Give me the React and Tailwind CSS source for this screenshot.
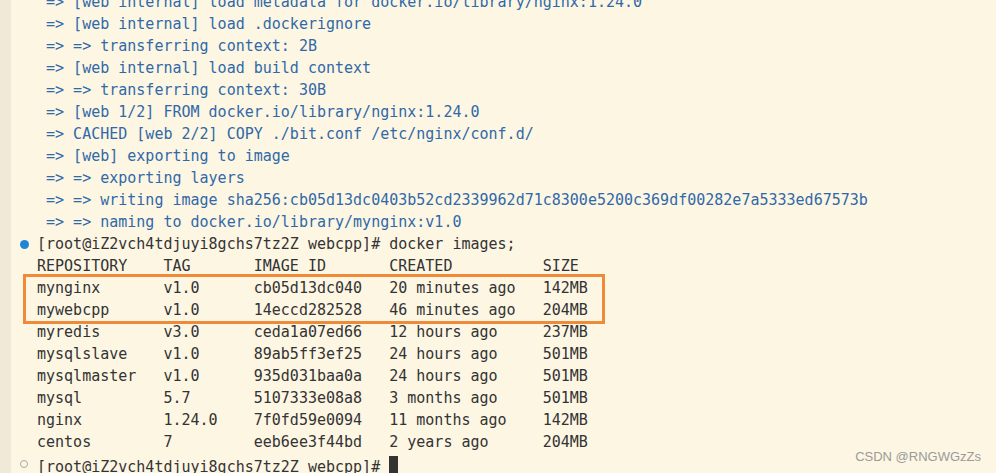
const buildLines = [
  " => [web internal] load metadata for docker.io/library/nginx:1.24.0",
  " => [web internal] load .dockerignore",
  " => => transferring context: 2B",
  " => [web internal] load build context",
  " => => transferring context: 30B",
  " => [web 1/2] FROM docker.io/library/nginx:1.24.0",
  " => CACHED [web 2/2] COPY ./bit.conf /etc/nginx/conf.d/",
  " => [web] exporting to image",
  " => => exporting layers",
  " => => writing image sha256:cb05d13dc0403b52cd2339962d71c8300e5200c369df00282e7a5333ed67573b",
  " => => naming to docker.io/library/mynginx:v1.0",
];

const images = [
  ["REPOSITORY", "TAG", "IMAGE ID", "CREATED", "SIZE"],
  ["mynginx", "v1.0", "cb05d13dc040", "20 minutes ago", "142MB"],
  ["mywebcpp", "v1.0", "14eccd282528", "46 minutes ago", "204MB"],
  ["myredis", "v3.0", "ceda1a07ed66", "12 hours ago", "237MB"],
  ["mysqlslave", "v1.0", "89ab5ff3ef25", "24 hours ago", "501MB"],
  ["mysqlmaster", "v1.0", "935d031baa0a", "24 hours ago", "501MB"],
  ["mysql", "5.7", "5107333e08a8", "3 months ago", "501MB"],
  ["nginx", "1.24.0", "7f0fd59e0094", "11 months ago", "142MB"],
  ["centos", "7", "eeb6ee3f44bd", "2 years ago", "204MB"],
];

const widths = [14, 10, 15, 17, 0];

const formatRow = (row) =>
  row.map((cell, i) => (widths[i] ? cell.padEnd(widths[i], " ") : cell)).join("");

const Line = ({ marker, className = "", children }) => (
  <div className="flex h-[22px] items-center">
    <div className="flex w-[26px] shrink-0 items-center justify-center">
      {marker}
    </div>
    <div className={`whitespace-pre ${className}`}>{children}</div>
  </div>
);

export default function App() {
  const rows = images.map(formatRow);

  return (
    <div className="relative flex h-[473px] w-full overflow-hidden bg-[#fdf6e3]">
      {/* gutter */}
      <div className="w-[11px] shrink-0 bg-[#f1e9d7]" />

      <div
        className="-mt-[9px] flex-1 text-[15px] leading-[22px] text-[#333333]"
        style={{ fontFamily: '"DejaVu Sans Mono", "Liberation Mono", monospace' }}
      >
        {buildLines.map((line, i) => (
          <Line key={i} className="text-[#3069a8]">
            {line}
          </Line>
        ))}

        <Line marker={<span className="block h-[9px] w-[9px] rounded-full bg-[#1f86d6]" />}>
          [root@iZ2vch4tdjuyi8gchs7tz2Z webcpp]# docker images;
        </Line>

        <Line>{rows[0]}</Line>

        {/* highlighted rows */}
        <div className="relative">
          <Line>{rows[1]}</Line>
          <Line>{rows[2]}</Line>
          <span className="pointer-events-none absolute -bottom-[3px] -top-[3px] left-[12px] w-[582px] border-[3px] border-[#ef8a3b]" />
        </div>

        {rows.slice(3).map((row, i) => (
          <Line key={i}>{row}</Line>
        ))}

        <Line
          marker={
            <span className="block h-[8px] w-[8px] rounded-full border border-[#a8a8a8]" />
          }
        >
          <span>[root@iZ2vch4tdjuyi8gchs7tz2Z webcpp]# </span>
          <span className="inline-block h-[21px] w-[9px] translate-y-[5px] bg-[#333333]" />
        </Line>
      </div>

      <div
        className="absolute bottom-[7px] right-[15px] text-[13px] text-[#9a9a9a]"
        style={{ fontFamily: '"Liberation Sans", Arial, sans-serif' }}
      >
        CSDN @RNGWGzZs
      </div>
    </div>
  );
}
